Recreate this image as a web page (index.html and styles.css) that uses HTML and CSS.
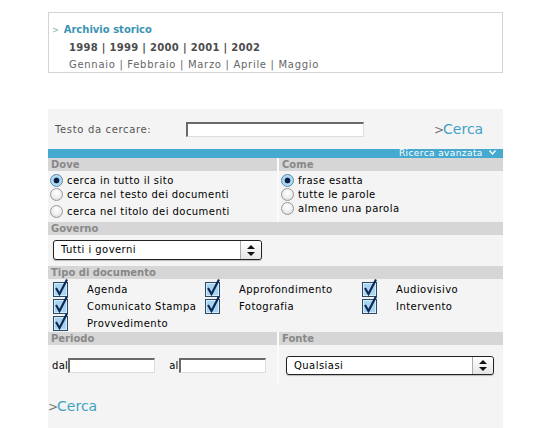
FILE: index.html
```html
<!DOCTYPE html>
<html lang="it">
<head>
<meta charset="utf-8">
<title>Ricerca</title>
<link rel="stylesheet" href="styles.css">
</head>
<body>
<div class="archive">
  <div class="archive-title"><span class="arr">&gt;</span>Archivio storico</div>
  <div class="years">1998 | 1999 | 2000 | 2001 | 2002</div>
  <div class="months">Gennaio | Febbraio | Marzo | Aprile | Maggio</div>
</div>

<form class="panel">
  <div class="search-row">
    <label class="search-label">Testo da cercare:</label>
    <input class="text-input search-input" type="text">
    <a class="cerca cerca-top"><span class="cerca-arr">&gt;</span>Cerca</a>
  </div>
  <div class="adv-bar">Ricerca avanzata <svg class="chev" width="7" height="5" viewBox="0 0 7 5"><path d="M0.5 0.5L3.5 4L6.5 0.5" fill="none" stroke="#fff" stroke-width="1.4"/></svg></div>

  <div class="two">
    <div class="col">
      <div class="head">Dove</div>
      <div class="opts">
        <label class="opt"><input class="radio" type="radio" name="dove" checked> cerca in tutto il sito</label>
        <label class="opt"><input class="radio" type="radio" name="dove"> cerca nel testo dei documenti</label>
        <label class="opt opt-gap"><input class="radio" type="radio" name="dove"> cerca nel titolo dei documenti</label>
      </div>
    </div>
    <div class="col col-r">
      <div class="head">Come</div>
      <div class="opts">
        <label class="opt"><input class="radio" type="radio" name="come" checked> frase esatta</label>
        <label class="opt"><input class="radio" type="radio" name="come"> tutte le parole</label>
        <label class="opt"><input class="radio" type="radio" name="come"> almeno una parola</label>
      </div>
    </div>
  </div>

  <div class="head">Governo</div>
  <div class="gov-row">
    <div class="select gov-select"><span class="sel-text">Tutti i governi</span><span class="sel-btn"><svg width="8" height="11" viewBox="0 0 8 11"><path d="M4 0L8 4H0Z M4 11L0 7H8Z" fill="#111"/></svg></span></div>
  </div>

  <div class="head">Tipo di documento</div>
  <div class="checks">
    <label class="chk"><svg class="cb" width="16" height="18" viewBox="0 0 16 18"><rect x="0.5" y="3.5" width="14" height="14" fill="#a9d4f0" stroke="#2b4a68"/><rect x="1.5" y="4.5" width="12" height="12" fill="none" stroke="#d6ecfb"/><path d="M3 9 L6.5 15 L14 0.5" fill="none" stroke="#0d2a55" stroke-width="2.2"/></svg><span>Agenda</span></label>
    <label class="chk"><svg class="cb" width="16" height="18" viewBox="0 0 16 18"><rect x="0.5" y="3.5" width="14" height="14" fill="#a9d4f0" stroke="#2b4a68"/><rect x="1.5" y="4.5" width="12" height="12" fill="none" stroke="#d6ecfb"/><path d="M3 9 L6.5 15 L14 0.5" fill="none" stroke="#0d2a55" stroke-width="2.2"/></svg><span>Approfondimento</span></label>
    <label class="chk"><svg class="cb" width="16" height="18" viewBox="0 0 16 18"><rect x="0.5" y="3.5" width="14" height="14" fill="#a9d4f0" stroke="#2b4a68"/><rect x="1.5" y="4.5" width="12" height="12" fill="none" stroke="#d6ecfb"/><path d="M3 9 L6.5 15 L14 0.5" fill="none" stroke="#0d2a55" stroke-width="2.2"/></svg><span>Audiovisivo</span></label>
    <label class="chk"><svg class="cb" width="16" height="18" viewBox="0 0 16 18"><rect x="0.5" y="3.5" width="14" height="14" fill="#a9d4f0" stroke="#2b4a68"/><rect x="1.5" y="4.5" width="12" height="12" fill="none" stroke="#d6ecfb"/><path d="M3 9 L6.5 15 L14 0.5" fill="none" stroke="#0d2a55" stroke-width="2.2"/></svg><span>Comunicato Stampa</span></label>
    <label class="chk"><svg class="cb" width="16" height="18" viewBox="0 0 16 18"><rect x="0.5" y="3.5" width="14" height="14" fill="#a9d4f0" stroke="#2b4a68"/><rect x="1.5" y="4.5" width="12" height="12" fill="none" stroke="#d6ecfb"/><path d="M3 9 L6.5 15 L14 0.5" fill="none" stroke="#0d2a55" stroke-width="2.2"/></svg><span>Fotografia</span></label>
    <label class="chk"><svg class="cb" width="16" height="18" viewBox="0 0 16 18"><rect x="0.5" y="3.5" width="14" height="14" fill="#a9d4f0" stroke="#2b4a68"/><rect x="1.5" y="4.5" width="12" height="12" fill="none" stroke="#d6ecfb"/><path d="M3 9 L6.5 15 L14 0.5" fill="none" stroke="#0d2a55" stroke-width="2.2"/></svg><span>Intervento</span></label>
    <label class="chk"><svg class="cb" width="16" height="18" viewBox="0 0 16 18"><rect x="0.5" y="3.5" width="14" height="14" fill="#a9d4f0" stroke="#2b4a68"/><rect x="1.5" y="4.5" width="12" height="12" fill="none" stroke="#d6ecfb"/><path d="M3 9 L6.5 15 L14 0.5" fill="none" stroke="#0d2a55" stroke-width="2.2"/></svg><span>Provvedimento</span></label>
  </div>

  <div class="two">
    <div class="col">
      <div class="head">Periodo</div>
      <div class="period">
        <span>dal</span><input class="text-input date-input" type="text">
        <span class="al">al</span><input class="text-input date-input" type="text">
      </div>
    </div>
    <div class="col col-r">
      <div class="head">Fonte</div>
      <div class="fonte">
        <div class="select fonte-select"><span class="sel-text">Qualsiasi</span><span class="sel-btn"><svg width="8" height="11" viewBox="0 0 8 11"><path d="M4 0L8 4H0Z M4 11L0 7H8Z" fill="#111"/></svg></span></div>
      </div>
    </div>
  </div>

  <div class="bottom">
    <a class="cerca"><span class="cerca-arr">&gt;</span>Cerca</a>
  </div>
</form>
</body>
</html>
```

FILE: styles.css
```css
* { box-sizing: border-box; }
body {
  margin: 0;
  background: #fff;
  font-family: "DejaVu Sans", Verdana, sans-serif;
  font-size: 10px;
  color: #000;
}
.archive {
  margin: 12px 0 0 48px;
  width: 455px;
  height: 61px;
  border: 1px solid #d4d4d4;
  padding: 10px 0 0 3px;
}
.archive-title {
  color: #3b93b4;
  font-weight: bold;
  font-size: 10px;
  line-height: 14px;
}
.arr { color: #8aa; font-weight: normal; font-size: 8px; margin-right: 5px; }
.years {
  margin: 3px 0 0 17px;
  font-weight: bold;
  color: #4c4c4c;
  letter-spacing: 0.3px;
  line-height: 14px;
}
.months {
  margin: 3px 0 0 17px;
  color: #666;
  line-height: 14px;
  letter-spacing: 0.7px;
}
.panel {
  margin: 36px 0 0 48px;
  width: 455px;
  background: #f4f4f4;
  padding-bottom: 20px;
}
.search-row {
  display: flex;
  align-items: center;
  height: 40px;
  padding: 0 0 0 7px;
}
.search-label {
  color: #555;
  width: 131px;
  letter-spacing: 0.65px;
}
.text-input {
  background: #fff;
  border-top: 2px solid #6a6a6a;
  border-left: 2px solid #6a6a6a;
  border-right: 1px solid #ddd;
  border-bottom: 1px solid #ddd;
  height: 15px;
  padding: 0;
  margin: 0;
}
.search-input { width: 178px; }
.cerca {
  color: #3fa2c6;
  font-family: "DejaVu Sans", Verdana, sans-serif;
  font-size: 14px;
  text-decoration: none;
}
.cerca-arr { color: #777; font-size: 12px; margin-right: -1px; }
.cerca-top { margin-left: 70px; }
.adv-bar {
  background: #46a9cf;
  color: #fff;
  height: 9px;
  font-size: 9px;
  line-height: 9px;
  text-align: right;
  padding-right: 7px;
  overflow: hidden;
  letter-spacing: 0.4px;
}
.chev { margin-left: 3px; vertical-align: 1px; }
.two { display: flex; }
.col { width: 229px; }
.col-r { width: 226px; border-left: 2px solid #fbfbfb; }
.head {
  background: #d6d6d6;
  color: #888;
  font-weight: bold;
  height: 13px;
  line-height: 13px;
  padding-left: 3px;
}
.opts { padding: 2px 0 4px 2px; }
.opt {
  display: flex;
  align-items: center;
  height: 14px;
  letter-spacing: 0.45px;
}
.opt-gap { margin-top: 3px; }
.radio {
  appearance: none;
  -webkit-appearance: none;
  width: 13px;
  height: 13px;
  margin: 0 4px 0 0;
  border-radius: 50%;
  border: 1px solid #999;
  background: radial-gradient(circle at 50% 35%, #fff 0, #eee 55%, #c9c9c9 100%);
}
.radio:checked {
  border-color: #5b86a6;
  background: radial-gradient(circle, #0c1e3e 0 2.5px, #9fd0ef 3.2px, #d8eefb 100%);
}
.gov-row { height: 31px; padding: 5px 0 0 5px; }
.select {
  display: flex;
  align-items: stretch;
  background: #fff;
  border: 1px solid #222;
  border-radius: 3px;
  box-shadow: 0 1px 1px #bbb;
}
.sel-text { flex: 1; padding-left: 7px; line-height: 18px; letter-spacing: 0.45px; }
.sel-btn {
  width: 21px;
  border-left: 1px solid #aaa;
  display: flex;
  align-items: center;
  justify-content: center;
  background: linear-gradient(#fff, #e6e6e6);
  border-radius: 0 3px 3px 0;
}
.gov-select { width: 209px; height: 20px; }
.checks {
  display: grid;
  grid-template-columns: 152px 157px auto;
  padding: 1px 0 1px 5px;
}
.chk {
  display: flex;
  align-items: flex-end;
  height: 17px;
  letter-spacing: 0.45px;
}
.chk span { margin-left: 18px; line-height: 14px; }
.cb { flex: none; }
.period {
  display: flex;
  align-items: center;
  height: 40px;
  padding-left: 4px;
  letter-spacing: 0.3px;
}
.date-input { width: 87px; }
.al { margin-left: 14px; }
.fonte { height: 40px; padding: 11px 0 0 7px; }
.fonte-select { width: 208px; height: 19px; }
.bottom { padding: 13px 0 0 0; height: 42px; }
```
